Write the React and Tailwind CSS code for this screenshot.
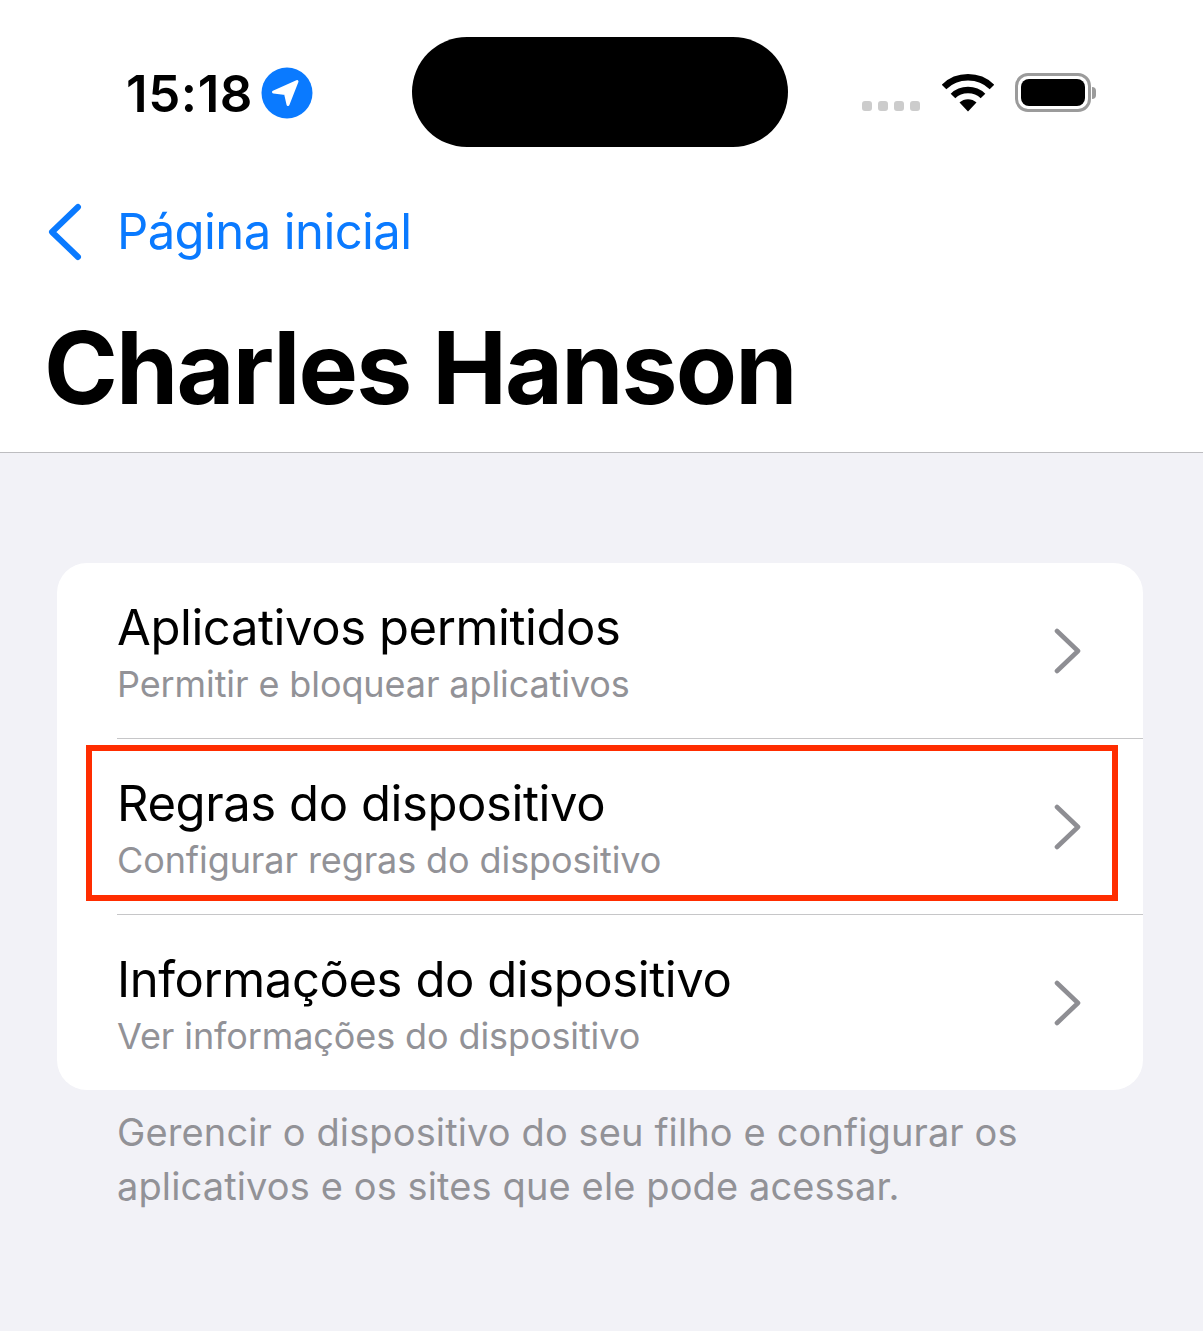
import React from 'react';

const rows = [
  { title: 'Aplicativos permitidos', subtitle: 'Permitir e bloquear aplicativos' },
  { title: 'Regras do dispositivo', subtitle: 'Configurar regras do dispositivo', highlighted: true },
  { title: 'Informações do dispositivo', subtitle: 'Ver informações do dispositivo' },
];

function Chevron() {
  return (
    <svg width="28" height="46" viewBox="0 0 28 46" fill="none" className="shrink-0">
      <path d="M3 3 L24 23 L3 43" stroke="#8e8e93" strokeWidth="4.6" strokeLinecap="round" strokeLinejoin="round" />
    </svg>
  );
}

function StatusBar() {
  return (
    <div className="flex h-[147px] items-start">
      <div className="flex w-[412px] items-center pl-[126px] pt-[67px]">
        <span className="text-[51px] leading-[51px] font-semibold tracking-[0.6px] text-black">15:18</span>
        <svg width="52" height="52" viewBox="0 0 52 52" className="ml-[8px] shrink-0">
          <circle cx="26" cy="26" r="25.5" fill="#0a7aff" />
          <path d="M12.5 25 L36 14.5 L27 37.5 L24.5 26.5 Z" fill="#fff" stroke="#fff" strokeWidth="3" strokeLinejoin="round" />
        </svg>
      </div>
      <div className="mt-[37px] h-[110px] w-[376px] shrink-0 rounded-[55px] bg-black" />
      <div className="flex flex-1 items-start pl-[74px] pt-[73px]">
        <div className="mt-[28px] flex gap-[6px]">
          <span className="size-[10px] rounded-[3px] bg-[#cccccc]" />
          <span className="size-[10px] rounded-[3px] bg-[#cccccc]" />
          <span className="size-[10px] rounded-[3px] bg-[#cccccc]" />
          <span className="size-[10px] rounded-[3px] bg-[#cccccc]" />
        </div>
        <svg width="52" height="38" viewBox="0 0 52 38" className="ml-[22px] mt-[1px] shrink-0" fill="none">
          <path d="M2 13 C15 0 37 0 50 13" stroke="#000" strokeWidth="6.5" />
          <path d="M11 22 C19 14 33 14 41 22" stroke="#000" strokeWidth="6.5" />
          <path d="M17.5 28.5 C22 24 30 24 34.5 28.5 L26 37.5 Z" fill="#000" />
        </svg>
        <div className="ml-[21px] flex items-center">
          <div className="flex h-[39px] w-[76px] items-center justify-center rounded-[13px] border-[3px] border-[#9b9b9b]">
            <div className="h-[27px] w-[64px] rounded-[8px] bg-black" />
          </div>
          <div className="ml-[1px] h-[12px] w-[4px] rounded-r-[6px] bg-[#9b9b9b]" />
        </div>
      </div>
    </div>
  );
}

function Row({ title, subtitle, highlighted, last }) {
  return (
    <div className="relative">
      <div className="flex h-[175px] items-center pl-[60px] pr-[61px]">
        <div className="flex-1 pt-[5px]">
          <div className="pt-[1px] text-[49px] leading-[60px] text-black tracking-[-0.42px]">{title}</div>
          <div className="mt-[1px] text-[36px] leading-[50px] text-[#929297] tracking-[-0.1px]">{subtitle}</div>
        </div>
        <Chevron />
      </div>
      {!last && <div className="ml-[60px] h-px bg-[#c6c6c8]" />}
      {highlighted && (
        <div className="absolute left-[29px] right-[25px] top-[6px] h-[156px] border-[6px] border-[#ff2d00]" />
      )}
    </div>
  );
}

export default function App() {
  return (
    <div className="min-h-[1331px] w-[1203px] bg-[#f2f2f7] font-['Inter','Liberation_Sans',sans-serif]">
      <div className="h-[453px] border-b border-[#bdbdc0] bg-white">
        <StatusBar />
        <div className="mt-[56px] flex items-center pl-[48px]">
          <svg width="34" height="58" viewBox="0 0 34 58" fill="none" className="shrink-0">
            <path d="M30 4 L4 29 L30 54" stroke="#0a7aff" strokeWidth="6" strokeLinecap="round" strokeLinejoin="round" />
          </svg>
          <span className="ml-[35px] text-[49px] leading-[58px] text-[#0a7aff] tracking-[-0.6px]">Página inicial</span>
        </div>
        <h1 className="mt-[52px] pl-[44px] text-[100px] leading-[110px] font-bold text-black tracking-[-1.85px]">Charles Hanson</h1>
      </div>
      <div className="pl-[57px] pr-[60px] pt-[110px]">
        <div className="rounded-[30px] bg-white">
          {rows.map((row, i) => (
            <Row key={row.title} {...row} last={i === rows.length - 1} />
          ))}
        </div>
        <p className="mt-[15px] pl-[60px] text-[38px] leading-[54px] text-[#929297] tracking-[0.12px]">
          Gerencir o dispositivo do seu filho e configurar os
          <br />
          aplicativos e os sites que ele pode acessar.
        </p>
      </div>
    </div>
  );
}
